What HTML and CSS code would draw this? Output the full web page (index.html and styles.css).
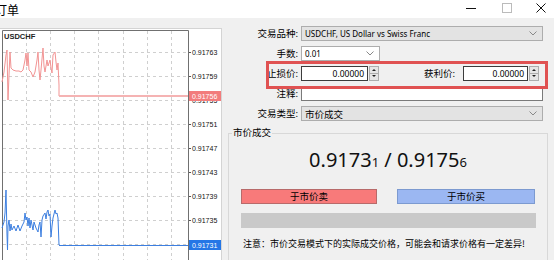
FILE: index.html
```html
<!DOCTYPE html>
<html>
<head>
    <title>订单</title>
    <link rel="stylesheet" href="styles.css">
</head>
<body>
    <div class="titlebar">
        <span class="title">订单</span>
        <div class="controls">
            <svg class="ctl-min" width="10" height="10"><line x1="0" y1="5.5" x2="10" y2="5.5" stroke="#111"/></svg>
            <svg class="ctl-max" width="10" height="10"><rect x="0.5" y="0.5" width="9" height="9" fill="none" stroke="#bbb"/></svg>
            <svg class="ctl-close" width="10" height="10"><path d="M0.5 0.5 L9.5 9.5 M9.5 0.5 L0.5 9.5" stroke="#111"/></svg>
        </div>
    </div>

    <div class="window">
        <div class="chart-pane">
            <svg class="chart" width="221" height="231" viewBox="0 29 221 231">
                <g class="grid" stroke="#cfcfcf" stroke-dasharray="3 3">
                    <line x1="26.5" y1="31" x2="26.5" y2="260"/>
                    <line x1="50.5" y1="31" x2="50.5" y2="260"/>
                    <line x1="74.5" y1="31" x2="74.5" y2="260"/>
                    <line x1="98.5" y1="31" x2="98.5" y2="260"/>
                    <line x1="123.5" y1="31" x2="123.5" y2="260"/>
                    <line x1="147.5" y1="31" x2="147.5" y2="260"/>
                    <line x1="171.5" y1="31" x2="171.5" y2="260"/>
                    <line x1="3" y1="52.5" x2="188" y2="52.5"/>
                    <line x1="3" y1="76.5" x2="188" y2="76.5"/>
                    <line x1="3" y1="100.5" x2="188" y2="100.5"/>
                    <line x1="3" y1="124.5" x2="188" y2="124.5"/>
                    <line x1="3" y1="148.5" x2="188" y2="148.5"/>
                    <line x1="3" y1="172.5" x2="188" y2="172.5"/>
                    <line x1="3" y1="196.5" x2="188" y2="196.5"/>
                    <line x1="3" y1="220.5" x2="188" y2="220.5"/>
                    <line x1="3" y1="244.5" x2="188" y2="244.5"/>
                </g>
                <g stroke="#555">
                    <line x1="189" y1="52.5" x2="191" y2="52.5"/>
                    <line x1="189" y1="76.5" x2="191" y2="76.5"/>
                    <line x1="189" y1="124.5" x2="191" y2="124.5"/>
                    <line x1="189" y1="148.5" x2="191" y2="148.5"/>
                    <line x1="189" y1="172.5" x2="191" y2="172.5"/>
                    <line x1="189" y1="196.5" x2="191" y2="196.5"/>
                    <line x1="189" y1="220.5" x2="191" y2="220.5"/>
                </g>
                <path d="M2.5 260 V30.5 H188.5 V260" fill="none" stroke="#707070"/>

                <text class="symbol" x="4" y="39">USDCHF</text>

                <polyline fill="none" stroke="#f29494" points="2,82 4,72 6,55 7,50 8,100 9,75 10,52 11,68 13,70 16,71 19,71 21,72 23,70 25,60 26,53 27,66 28,53 29,70 31,72 33,77 35,72 37,60 38,52 39,70 40,80 41,70 43,48 44,66 45,72 47,60 48,66 50,60 51,68 52,73 53,55 55,52 56,62 57,70 58,63 59,85 59,96"/>
                <line x1="59" y1="96" x2="188" y2="96" stroke="#f5b3b3" stroke-width="2"/>

                <polyline fill="none" stroke="#3d7fe0" points="2,228 4,222 5,213 6,190 7,235 7.5,250 8,226 9,220 10,231 11,224 12,230 14,226 16,231 18,225 20,231 22,226 24,222 25,213 26,220 27,217 28,226 29,218 30,228 31,220 33,230 34,222 36,228 38,232 39,225 40,222 41,237 42,220 43,216 45,213 46,219 47,212 48,210 49,216 50,214 51,237 52,226 53,218 55,210 56,214 57,213 58,218 59,245"/>
                <line x1="59" y1="245.5" x2="188" y2="245.5" stroke="#3d7fe0"/>

                <g class="axis">
                    <text x="192" y="55">0.91763</text>
                    <text x="192" y="79">0.91759</text>
                    <text x="192" y="103">0.91755</text>
                    <text x="192" y="127">0.91751</text>
                    <text x="192" y="151">0.91747</text>
                    <text x="192" y="175">0.91743</text>
                    <text x="192" y="199">0.91739</text>
                    <text x="192" y="223">0.91735</text>
                </g>
                <rect x="189" y="91" width="32" height="10" fill="#f27c7c"/>
                <text class="axis-tag" x="192" y="99">0.91756</text>
                <rect x="189" y="240" width="32" height="10" fill="#2476e6"/>
                <text class="axis-tag" x="192" y="248">0.91731</text>
            </svg>
        </div>

        <div class="order-form">
            <div class="fields">
                <label>交易品种:</label>
                <div class="select grey">
                    <span class="latin">USDCHF, US Dollar vs Swiss Franc</span>
                    <svg width="8" height="5"><polyline points="0.5,0.5 4,4 7.5,0.5" fill="none" stroke="#888"/></svg>
                </div>

                <label>手数:</label>
                <div class="select white lot">
                    <span class="latin">0.01</span>
                    <svg width="8" height="5"><polyline points="0.5,0.5 4,4 7.5,0.5" fill="none" stroke="#888"/></svg>
                </div>

                <label>止损价:</label>
                <div class="sltp">
                    <div class="spin sl">
                        <span class="spin-value latin">0.00000</span>
                        <span class="spin-btns"><i class="up"></i><i class="down"></i></span>
                    </div>
                    <label class="tp-label">获利价:</label>
                    <div class="spin tp">
                        <span class="spin-value latin">0.00000</span>
                        <span class="spin-btns"><i class="up"></i><i class="down"></i></span>
                    </div>
                </div>

                <label>注释:</label>
                <div class="textbox"></div>

                <label>交易类型:</label>
                <div class="select grey">
                    <span>市价成交</span>
                    <svg width="8" height="5"><polyline points="0.5,0.5 4,4 7.5,0.5" fill="none" stroke="#888"/></svg>
                </div>
            </div>

            <fieldset class="market">
                <legend>市价成交</legend>
                <div class="quote">0.9173<small>1</small> / 0.9175<small>6</small></div>
                <div class="actions">
                    <button class="sell">于市价卖</button>
                    <button class="buy">于市价买</button>
                </div>
                <div class="progress"></div>
                <p class="note">注意：市价交易模式下的实际成交价格，可能会和请求价格有一定差异!</p>
            </fieldset>

            <div class="highlight"></div>
        </div>
    </div>
</body>
</html>
```

FILE: styles.css
```css
body {
  margin: 0;
  width: 554px;
  height: 260px;
  overflow: hidden;
  background: #f0f0f0;
  font-family: "Noto Sans", "Noto Sans CJK SC", sans-serif;
  font-size: 9.5px;
  color: #000;
}

.titlebar {
  height: 18px;
  background: #fff;
  display: flex;
  align-items: center;
  justify-content: space-between;
}

.title {
  margin-left: -5px;
  font-family: "Noto Sans CJK SC", sans-serif;
  font-size: 12px;
}

.controls {
  display: flex;
  align-items: center;
  padding-right: 8px;
  margin-top: -2px;
}

.ctl-max {
  margin: 0 24px 0 26px;
}

.window {
  display: flex;
  height: 242px;
}

.chart-pane {
  width: 221px;
  margin-top: 10px;
  background: #fff;
  border-top: 1px solid #d4d4d4;
  border-right: 1px solid #d4d4d4;
}

.chart {
  display: block;
}

.chart text {
  font-family: "Liberation Sans", sans-serif;
  font-size: 7px;
  fill: #111;
}

.chart .symbol {
  font-size: 7.5px;
  font-weight: bold;
  fill: #222;
}

.chart .axis-tag {
  fill: #fff;
}

.order-form {
  flex: 1;
  position: relative;
  padding-top: 8px;
}

.fields {
  display: grid;
  grid-template-columns: 76px 242px;
  column-gap: 3px;
  row-gap: 5px;
  grid-auto-rows: 15px;
  align-items: center;
}

.fields label {
  text-align: right;
  line-height: 15px;
}

.latin {
  font-family: "Noto Sans", sans-serif;
  font-size: 8px;
}

.spin .latin {
  font-size: 8.5px;
}

.select {
  height: 15px;
  box-sizing: border-box;
  border: 1px solid #adadad;
  display: flex;
  align-items: center;
  justify-content: space-between;
  padding: 0 5px 0 3px;
}

.select svg {
  display: block;
}

.select.grey {
  background: #e3e3e3;
}

.select.white {
  background: #fff;
}

.lot {
  width: 79px;
}

.sltp {
  display: flex;
  height: 15px;
  align-items: center;
}

.spin {
  display: flex;
  height: 15px;
}

.spin.sl {
  width: 78px;
}

.spin.tp {
  width: 76px;
  margin-right: 4px;
}

.spin-value {
  flex: 1;
  box-sizing: border-box;
  border: 1px solid #3c3c3c;
  background: #fff;
  text-align: right;
  padding-right: 3px;
  line-height: 13px;
}

.spin-btns {
  width: 10px;
  margin-left: 1px;
  display: flex;
  flex-direction: column;
}

.spin-btns i {
  flex: 1;
  border: 1px solid #adadad;
  background: #e6e6e6;
  position: relative;
}

.spin-btns i + i {
  border-top: none;
}

.spin-btns i::after {
  content: "";
  position: absolute;
  left: 2px;
  top: 2px;
  border-left: 2px solid transparent;
  border-right: 2px solid transparent;
}

.spin-btns .up::after {
  border-bottom: 2px solid #222;
}

.spin-btns .down::after {
  top: 1px;
  border-top: 2px solid #222;
}

.tp-label {
  flex: 1;
  margin-right: 8px;
}

.textbox {
  height: 15px;
  box-sizing: border-box;
  border: 1px solid #7a7a7a;
  background: #fff;
}

.market {
  margin: 6px 6px 0 6px;
  padding: 0;
  border: 1px solid #d8d8d8;
  height: 140px;
}

.market legend {
  margin-left: 3px;
  padding: 0 1px;
  line-height: 12px;
}

.quote {
  margin-top: 9px;
  text-align: center;
  font-family: "Noto Sans", sans-serif;
  font-size: 20px;
  line-height: 24px;
  color: #111;
}

.quote small {
  font-size: 13px;
}

.actions {
  display: flex;
  justify-content: space-between;
  margin: 15px 12px 0 12px;
}

.actions button {
  height: 15px;
  padding: 0;
  font-family: "Noto Sans CJK SC", sans-serif;
  font-size: 9.5px;
  line-height: 13px;
  color: #000;
}

.sell {
  width: 136px;
  background: #f87a7a;
  border: 1px solid #b86a6a;
}

.buy {
  width: 138px;
  background: #9bb7f2;
  border: 1px solid #7c9ad0;
}

.progress {
  height: 15px;
  margin: 9px 11px 0 12px;
  background: #c9c9c9;
}

.note {
  margin: 10px 0 0 14px;
  font-family: "Noto Sans CJK SC", sans-serif;
  font-size: 9px;
  line-height: 12px;
}

.highlight {
  position: absolute;
  left: 44px;
  top: 43px;
  width: 282px;
  height: 28px;
  box-sizing: border-box;
  border: 3px solid #e05252;
}
```
